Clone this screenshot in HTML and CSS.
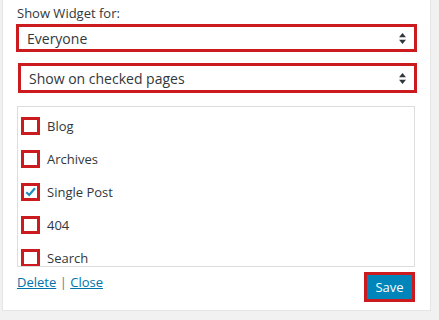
FILE: index.html
```html
<!DOCTYPE html>
<html>
<head>
<meta charset="utf-8">
<link rel="stylesheet" href="styles.css">
</head>
<body>
<div class="panel">
  <div class="label">Show Widget for:</div>
  <div class="select sel1">
    <span>Everyone</span>
    <svg class="arrows" width="7" height="11" viewBox="0 0 7 11"><path d="M3.5 0 L7 4.2 L0 4.2 Z M0 6.8 L7 6.8 L3.5 11 Z" fill="#32373c"/></svg>
  </div>
  <div class="select sel2">
    <span>Show on checked pages</span>
    <svg class="arrows" width="7" height="11" viewBox="0 0 7 11"><path d="M3.5 0 L7 4.2 L0 4.2 Z M0 6.8 L7 6.8 L3.5 11 Z" fill="#32373c"/></svg>
  </div>
  <div class="checklist">
    <div class="row"><span class="cb"></span><span>Blog</span></div>
    <div class="row"><span class="cb"></span><span>Archives</span></div>
    <div class="row"><span class="cb"><svg width="14" height="14" viewBox="0 0 14 14"><path d="M2.5 7.2 L5.6 10.2 L11.8 3" fill="none" stroke="#1e8cbe" stroke-width="2.4"/></svg></span><span>Single Post</span></div>
    <div class="row"><span class="cb"></span><span>404</span></div>
    <div class="row"><span class="cb"></span><span>Search</span></div>
  </div>
  <div class="actions">
    <div class="links"><a href="#">Delete</a> <span class="sep">|</span> <a href="#">Close</a></div>
    <div class="save"><span>Save</span></div>
  </div>
</div>
</body>
</html>
```

FILE: styles.css
```css
html, body {
  margin: 0;
  padding: 0;
  background: #f1f1f1;
  font-family: "Open Sans", "Noto Sans", sans-serif;
  color: #32373c;
  font-size: 13px;
}
.panel {
  box-sizing: border-box;
  margin-left: 2px;
  width: 429px;
  height: 311px;
  background: #fff;
  border: 1px solid #e5e5e5;
  border-top: 0;
  padding: 3px 13px 0 13px;
}
.label {
  line-height: 20px;
  padding-left: 1px;
}
.select {
  box-sizing: border-box;
  display: flex;
  align-items: center;
  justify-content: space-between;
  border: 3px solid #cc1b1f;
  background: #fff;
  font-size: 14px;
  padding: 0 8px 0 8px;
}
.sel1 {
  margin-top: 1px;
  height: 28px;
}
.sel2 {
  margin-top: 11px;
  margin-left: 2px;
  height: 30px;
}
.checklist {
  box-sizing: border-box;
  margin-top: 13px;
  margin-left: 1px;
  width: 398px;
  height: 161px;
  border: 1px solid #dddddd;
  overflow: hidden;
  padding-top: 9px;
}
.row {
  display: flex;
  align-items: center;
  height: 33px;
}
.cb {
  box-sizing: border-box;
  width: 19px;
  height: 18px;
  border: 3px solid #cc1b1f;
  margin-left: 3px;
  margin-right: 7px;
  display: flex;
  align-items: center;
  justify-content: center;
  margin-top: -14px;
}
.row span:last-child {
  margin-top: -14px;
  font-size: 13px;
}
.actions {
  display: flex;
  justify-content: space-between;
  align-items: flex-start;
  margin-top: 5px;
  margin-left: 1px;
  width: 398px;
}
.links {
  padding-top: 1px;
  line-height: 18px;
}
.links a {
  color: #0073aa;
  text-decoration: underline;
}
.sep {
  color: #72777c;
}
.save {
  box-sizing: border-box;
  width: 51px;
  height: 30px;
  border: 3px solid #cc1b1f;
  background: #0085ba;
  color: #fff;
  display: flex;
  align-items: center;
  justify-content: center;
  font-size: 13px;
}
```
